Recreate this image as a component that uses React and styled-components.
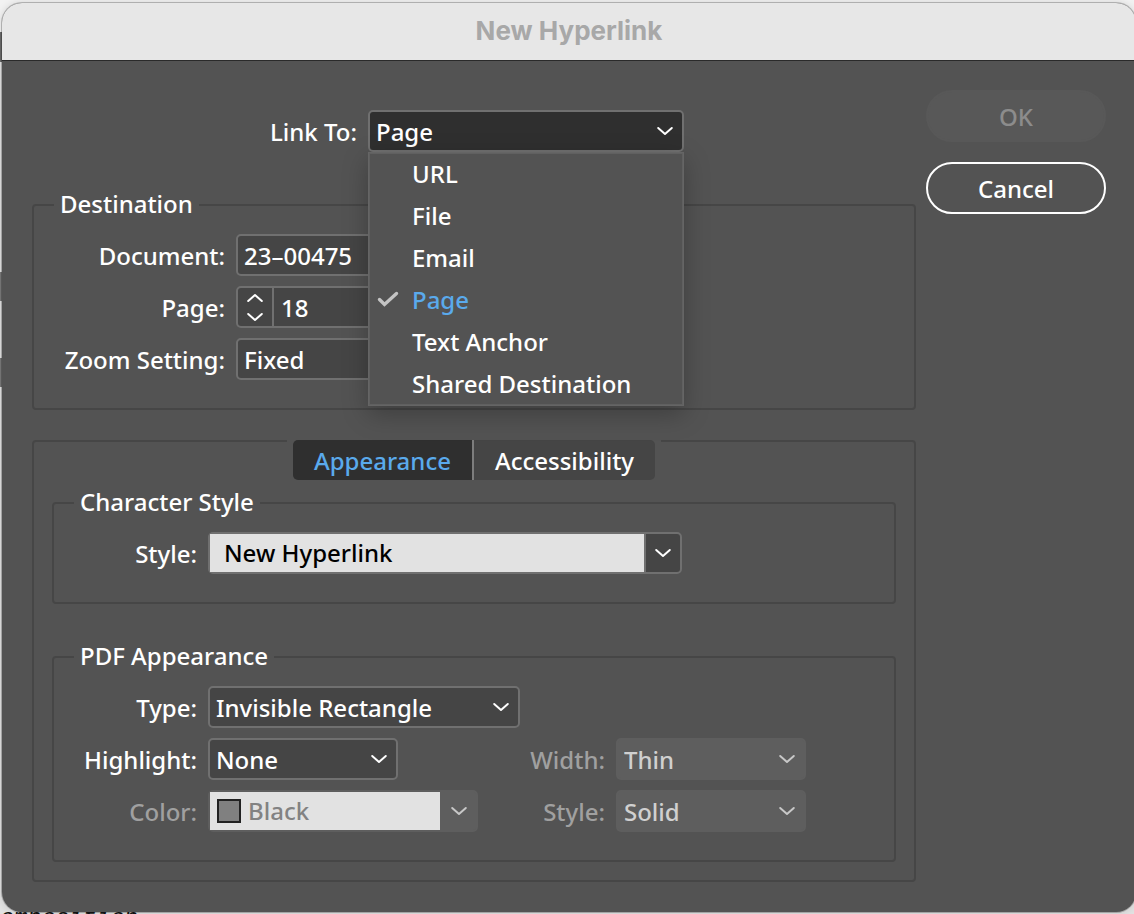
import { useState } from "react";
import styled, { createGlobalStyle, css } from "styled-components";

const GlobalStyle = createGlobalStyle`
  * {
    box-sizing: border-box;
  }
  body {
    margin: 0;
    overflow: hidden;
    background: linear-gradient(
      #f2f2f2 32px,
      #6a6a6a 32px 62px,
      #e2e2e2 62px 272px,
      #7a7a7a 272px 301px,
      #e2e2e2 301px 358px,
      #7a7a7a 358px 387px,
      #e2e2e2 387px
    ) no-repeat #e2e2e2;
    font-family: "Noto Sans", "Open Sans", sans-serif;
    font-size: 24px;
    font-weight: 500;
    line-height: 32px;
    color: #fff;
  }
  button, input, select {
    font: inherit;
    color: inherit;
    margin: 0;
  }
`;

const Dialog = styled.main`
  margin: 3px -2px 0 2px;
  border-radius: 20px;
  background: #535353;
  box-shadow: 0 0 0 1px rgba(0, 0, 0, 0.22), 0 0 8px rgba(0, 0, 0, 0.15);
`;

const TitleBar = styled.header`
  height: 58px;
  display: flex;
  align-items: center;
  justify-content: center;
  padding-bottom: 2px;
  background: #e7e7e7;
  border-bottom: 1px solid #2a2a2a;
  border-radius: 20px 20px 0 0;
`;

const Title = styled.h1`
  margin: 0;
  font-family: Inter, sans-serif;
  font-size: 26px;
  font-weight: 700;
  color: #a8a8a8;
`;

const Body = styled.form`
  display: grid;
  grid-template-columns: 1fr 180px;
  gap: 10px;
  padding: 29px 30px 30px;
`;

const Settings = styled.div`
  padding-top: 20px;
`;

const Actions = styled.div`
  display: flex;
  flex-direction: column;
  gap: 20px;
`;

const ActionButton = styled.button`
  height: 52px;
  padding: 2px 0 0;
  border: 2px solid #fff;
  border-radius: 26px;
  background: transparent;
  &:disabled {
    border-color: #585858;
    background: #585858;
    color: #8c8c8c;
  }
`;

const Fields = styled.div`
  display: grid;
  grid-template-columns: ${({ $columns }) => $columns};
  gap: 10px;
`;

const Label = styled.label`
  padding: 2px 1px 0 0;
  line-height: 40px;
  text-align: right;
  white-space: nowrap;
  color: ${({ $dim }) => ($dim ? "#a0a0a0" : "#fff")};
`;

const Group = styled.fieldset`
  min-width: 0;
  margin: ${({ $top }) => $top}px 0 0;
  padding: 13px 0 28px;
  border: 2px solid #464646;
  border-radius: 4px;
`;

const Legend = styled.legend`
  height: 32px;
  margin-left: 20px;
  padding: 0 6px;
  line-height: 30px;
`;

const Panel = styled.section`
  margin-top: 30px;
  padding: 0 18px 18px;
  border: 2px solid #464646;
  border-radius: 4px;
`;

const TabList = styled.div`
  width: fit-content;
  display: flex;
  margin: -2px auto 0;
  padding: 0 6px;
  background: #535353;
`;

const Tab = styled.button`
  height: 40px;
  padding: 2px 21px 0;
  border: 0;
  background: #454545;
  &:first-child {
    border-right: 2px solid #7d7d7d;
    border-radius: 5px 0 0 5px;
  }
  &:last-child {
    border-radius: 0 5px 5px 0;
  }
  ${({ $active }) =>
    $active &&
    css`
      background: #2f2f2f;
      color: #5aaaec;
    `}
`;

const SelectBox = styled.div`
  position: relative;
  display: grid;
  align-items: center;
  width: ${({ $width }) => $width}px;
  grid-column: ${({ $span }) => ($span ? `span ${$span}` : "auto")};
  > * {
    grid-area: 1 / 1;
  }
  > svg {
    justify-self: end;
    margin-right: 10px;
    pointer-events: none;
  }
`;

const Select = styled.select`
  width: 100%;
  height: 42px;
  padding: 2px 36px 0 6px;
  appearance: none;
  border: 2px solid #707070;
  border-radius: 5px;
  background: ${({ $open }) => ($open ? "#2f2f2f" : "#454545")};
  &:disabled {
    opacity: 1;
    border-color: #5e5e5e;
    background: #5e5e5e;
    color: #d0d0d0;
  }
`;

const Menu = styled.div`
  position: absolute;
  z-index: 1;
  top: 100%;
  left: 0;
  width: 100%;
  border: 1px solid #656565;
  background: #535353;
  box-shadow: inset 0 0 0 1px #606060, 0 8px 24px rgba(0, 0, 0, 0.25);
`;

const MenuItem = styled.button`
  width: 100%;
  height: 42px;
  display: grid;
  grid-template-columns: 22px 1fr;
  gap: 13px;
  align-items: center;
  padding: 0 8px;
  border: 0;
  background: transparent;
  text-align: left;
  white-space: nowrap;
  color: ${({ $checked }) => ($checked ? "#5aaaec" : "#fff")};
`;

const Combo = styled.div`
  display: flex;
  width: ${({ $width }) => $width}px;
  height: 42px;
  border: 2px solid ${({ $dim }) => ($dim ? "#5e5e5e" : "#707070")};
  border-radius: 5px;
  background: ${({ $dim }) => ($dim ? "#5e5e5e" : "#454545")};
`;

const ComboValue = styled.div`
  flex: 1;
  min-width: 0;
  display: flex;
  align-items: center;
  gap: 7px;
  padding-left: ${({ $inset }) => $inset}px;
  background: #e2e2e2;
  color: ${({ $dim }) => ($dim ? "#828282" : "#000")};
  > input {
    padding-bottom: 2px;
  }
`;

const TextInput = styled.input`
  flex: 1;
  min-width: 0;
  height: 38px;
  padding: 0;
  border: 0;
  background: transparent;
`;

const ComboButton = styled.button`
  width: 36px;
  display: flex;
  align-items: center;
  justify-content: center;
  padding: 0;
  border: 0;
  border-left: 2px solid ${({ disabled }) => (disabled ? "#5e5e5e" : "#707070")};
  background: transparent;
`;

const Swatch = styled.span`
  width: 24px;
  height: 24px;
  border: 2px solid #222;
  background: #808080;
`;

const Stepper = styled.div`
  width: 36px;
  display: grid;
  margin-right: 7px;
  border-right: 2px solid #707070;
`;

const StepButton = styled.button`
  display: flex;
  align-items: center;
  justify-content: center;
  padding: 0;
  border: 0;
  background: transparent;
`;

// top edge of the text that runs on behind the dialog
const PageText = styled.p`
  height: 3px;
  margin: 0;
  overflow: hidden;
  font-family: "Liberation Mono", monospace;
  font-size: 23px;
  font-style: italic;
  font-weight: 400;
  line-height: 14px;
  color: #111;
`;

const Chevron = ({ color = "#fff", up }) => (
  <svg width="18" height="10" viewBox="0 0 18 10" fill="none" aria-hidden="true">
    <path
      d={up ? "M2.2 8 9 2l6.8 6" : "M2.2 2 9 8l6.8-6"}
      stroke={color}
      strokeWidth="2"
      strokeLinecap="round"
      strokeLinejoin="round"
    />
  </svg>
);

const Check = () => (
  <svg width="22" height="18" viewBox="0 0 22 18" fill="none" aria-hidden="true">
    <path d="M2.5 8.5 7.5 13.5 19.5 2.5" stroke="#c4c4c4" strokeWidth="3.4" strokeLinecap="round" />
  </svg>
);

const SelectField = ({ id, label, value, width, span, disabled }) => (
  <>
    <Label htmlFor={id} $dim={disabled}>
      {label}
    </Label>
    <SelectBox $width={width} $span={span}>
      <Select id={id} disabled={disabled}>
        <option>{value}</option>
      </Select>
      <Chevron color={disabled ? "#c8c8c8" : "#fff"} />
    </SelectBox>
  </>
);

const linkTypes = ["URL", "File", "Email", "Page", "Text Anchor", "Shared Destination"];
const tabs = ["Appearance", "Accessibility"];

const App = () => {
  const [linkTo, setLinkTo] = useState("Page");
  const [open, setOpen] = useState(true);
  const [tab, setTab] = useState("Appearance");
  const [page, setPage] = useState(18);

  const pick = (type) => {
    setLinkTo(type);
    setOpen(false);
  };

  return (
    <>
      <GlobalStyle />
      <Dialog>
        <TitleBar>
          <Title>New Hyperlink</Title>
        </TitleBar>
        <Body onSubmit={(e) => e.preventDefault()}>
          <Settings>
            <Fields $columns="326px 1fr">
              <Label htmlFor="link-to">Link To:</Label>
              <SelectBox $width={316}>
                <Select
                  id="link-to"
                  $open={open}
                  value={linkTo}
                  onMouseDown={(e) => {
                    e.preventDefault();
                    setOpen(!open);
                  }}
                  onChange={(e) => setLinkTo(e.target.value)}
                >
                  {linkTypes.map((type) => (
                    <option key={type}>{type}</option>
                  ))}
                </Select>
                <Chevron />
                {open && (
                  <Menu>
                    {linkTypes.map((type) => (
                      <MenuItem key={type} type="button" $checked={type === linkTo} onClick={() => pick(type)}>
                        {type === linkTo ? <Check /> : <span />}
                        {type}
                      </MenuItem>
                    ))}
                  </Menu>
                )}
              </SelectBox>
            </Fields>

            <Group $top={37}>
              <Legend>Destination</Legend>
              <Fields $columns="192px 1fr">
                <SelectField id="document" label="Document:" value="23–00475" width={400} />
                <Label htmlFor="page">Page:</Label>
                <Combo $width={240}>
                  <Stepper>
                    <StepButton type="button" aria-label="Next page" onClick={() => setPage(page + 1)}>
                      <Chevron up />
                    </StepButton>
                    <StepButton type="button" aria-label="Previous page" onClick={() => setPage(page - 1)}>
                      <Chevron />
                    </StepButton>
                  </Stepper>
                  <TextInput id="page" value={page} onChange={(e) => setPage(Number(e.target.value) || 0)} />
                </Combo>
                <SelectField id="zoom" label="Zoom Setting:" value="Fixed" width={240} />
              </Fields>
            </Group>

            <Panel>
              <TabList role="tablist">
                {tabs.map((name) => (
                  <Tab
                    key={name}
                    type="button"
                    role="tab"
                    aria-selected={name === tab}
                    $active={name === tab}
                    onClick={() => setTab(name)}
                  >
                    {name}
                  </Tab>
                ))}
              </TabList>

              <Group $top={7}>
                <Legend>Character Style</Legend>
                <Fields $columns="144px 1fr">
                  <Label htmlFor="char-style">Style:</Label>
                  <Combo $width={474}>
                    <ComboValue $inset={14}>
                      <TextInput id="char-style" defaultValue="New Hyperlink" />
                    </ComboValue>
                    <ComboButton type="button" aria-label="Character styles">
                      <Chevron />
                    </ComboButton>
                  </Combo>
                </Fields>
              </Group>

              <Group $top={37}>
                <Legend>PDF Appearance</Legend>
                <Fields $columns="144px 270px 118px 1fr">
                  <SelectField id="type" label="Type:" value="Invisible Rectangle" width={312} span={3} />
                  <SelectField id="highlight" label="Highlight:" value="None" width={190} />
                  <SelectField id="width" label="Width:" value="Thin" width={190} disabled />
                  <Label htmlFor="color" $dim>
                    Color:
                  </Label>
                  <Combo $width={270} $dim>
                    <ComboValue $inset={7} $dim>
                      <Swatch />
                      <TextInput id="color" defaultValue="Black" disabled />
                    </ComboValue>
                    <ComboButton type="button" aria-label="Colors" disabled>
                      <Chevron color="#c8c8c8" />
                    </ComboButton>
                  </Combo>
                  <SelectField id="line-style" label="Style:" value="Solid" width={190} disabled />
                </Fields>
              </Group>
            </Panel>
          </Settings>

          <Actions>
            <ActionButton type="submit" disabled>
              OK
            </ActionButton>
            <ActionButton type="button">Cancel</ActionButton>
          </Actions>
        </Body>
      </Dialog>
      <PageText>omposition</PageText>
    </>
  );
};

export default App;
